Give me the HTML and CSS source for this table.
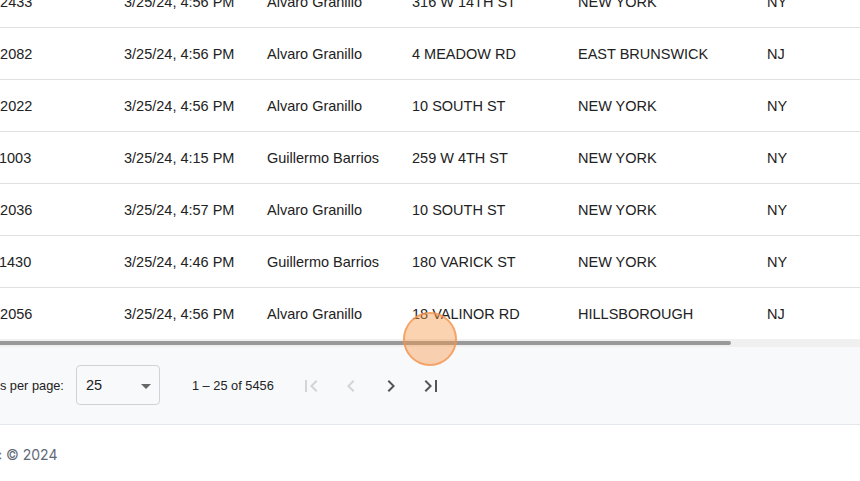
FILE: index.html
```html
<!DOCTYPE html>
<html>
<head>
<meta charset="utf-8">
<link rel="stylesheet" href="styles.css">
</head>
<body>
<div class="viewport">
  <div class="table-wrap">
    <div class="table">
      <div class="row"><div class="c c1">12433</div><div class="c c2">3/25/24, 4:56 PM</div><div class="c c3">Alvaro Granillo</div><div class="c c4">316 W 14TH ST</div><div class="c c5">NEW YORK</div><div class="c c6">NY</div></div>
      <div class="row"><div class="c c1">12082</div><div class="c c2">3/25/24, 4:56 PM</div><div class="c c3">Alvaro Granillo</div><div class="c c4">4 MEADOW RD</div><div class="c c5">EAST BRUNSWICK</div><div class="c c6">NJ</div></div>
      <div class="row"><div class="c c1">12022</div><div class="c c2">3/25/24, 4:56 PM</div><div class="c c3">Alvaro Granillo</div><div class="c c4">10 SOUTH ST</div><div class="c c5">NEW YORK</div><div class="c c6">NY</div></div>
      <div class="row"><div class="c c1">11003</div><div class="c c2">3/25/24, 4:15 PM</div><div class="c c3">Guillermo Barrios</div><div class="c c4">259 W 4TH ST</div><div class="c c5">NEW YORK</div><div class="c c6">NY</div></div>
      <div class="row"><div class="c c1">12036</div><div class="c c2">3/25/24, 4:57 PM</div><div class="c c3">Alvaro Granillo</div><div class="c c4">10 SOUTH ST</div><div class="c c5">NEW YORK</div><div class="c c6">NY</div></div>
      <div class="row"><div class="c c1">11430</div><div class="c c2">3/25/24, 4:46 PM</div><div class="c c3">Guillermo Barrios</div><div class="c c4">180 VARICK ST</div><div class="c c5">NEW YORK</div><div class="c c6">NY</div></div>
      <div class="row last"><div class="c c1">12056</div><div class="c c2">3/25/24, 4:56 PM</div><div class="c c3">Alvaro Granillo</div><div class="c c4">18 VALINOR RD</div><div class="c c5">HILLSBOROUGH</div><div class="c c6">NJ</div></div>
    </div>
    <div class="scrollbar"><div class="thumb"></div></div>
    <div class="cursor-dot"></div>
  </div>
  <div class="paginator">
    <span class="pg-label">Items per page:</span>
    <div class="select"><span>25</span><span class="arrow"></span></div>
    <span class="range">1 – 25 of 5456</span>
    <div class="btns">
      <button class="pbtn disabled" aria-label="First page"><svg viewBox="0 0 24 24" width="24" height="24"><path d="M18.41 16.59L13.82 12l4.590-4.59L17 6l-6 6 6 6zM6 6h2v12H6z"/></svg></button>
      <button class="pbtn disabled" aria-label="Previous page"><svg viewBox="0 0 24 24" width="24" height="24"><path d="M15.41 7.41L14 6l-6 6 6 6 1.41-1.41L10.83 12z"/></svg></button>
      <button class="pbtn" aria-label="Next page"><svg viewBox="0 0 24 24" width="24" height="24"><path d="M10 6L8.59 7.41 13.17 12l-4.58 4.59L10 18l6-6z"/></svg></button>
      <button class="pbtn" aria-label="Last page"><svg viewBox="0 0 24 24" width="24" height="24"><path d="M5.59 7.41L10.18 12l-4.59 4.59L7 18l6-6-6-6zM16 6h2v12h-2z"/></svg></button>
    </div>
  </div>
  <footer class="footer">Inc © 2024</footer>
</div>
</body>
</html>
```
FILE: styles.css
```css
html, body {
  margin: 0;
  padding: 0;
  background: #ffffff;
  overflow: hidden;
}
.viewport {
  width: 860px;
  height: 481px;
  overflow: hidden;
  font-family: "Liberation Sans", Arial, sans-serif;
}
.table-wrap {
  position: relative;
  margin-top: -24px;
}
.table {
  display: flex;
  flex-direction: column;
  margin-left: -24px;
}
.row {
  display: flex;
  align-items: center;
  height: 52px;
  box-sizing: border-box;
  border-bottom: 1px solid #e0e0e0;
  font-size: 14.5px;
  color: #222222;
  white-space: nowrap;
  padding-top: 1px;
}
.row.last {
  border-bottom: none;
  height: 51px;
}
.c {
  padding-left: 16px;
  box-sizing: border-box;
  flex: none;
}
.c1 { width: 132px; }
.c2 { width: 143px; }
.c3 { width: 145px; }
.c4 { width: 166px; }
.c5 { width: 189px; }
.c6 { width: 120px; }
.scrollbar {
  height: 8px;
  background: #f0f0f0;
  display: flex;
  align-items: center;
}
.thumb {
  width: 731px;
  height: 4px;
  background: #999999;
  border-radius: 0 2px 2px 0;
}
.cursor-dot {
  position: absolute;
  left: 403px;
  top: 336px;
  width: 50px;
  height: 50px;
  border-radius: 50%;
  background: rgba(248, 150, 70, 0.42);
  border: 2px solid rgba(243, 150, 80, 0.75);
}
.paginator {
  height: 77px;
  background: #f8f9fb;
  border-bottom: 1px solid #e4e7ec;
  display: flex;
  align-items: center;
  font-size: 12.8px;
  color: #222222;
  margin-left: -25px;
}
.pg-label {
  margin-right: 12px;
  white-space: nowrap;
}
.select {
  width: 84px;
  height: 40px;
  box-sizing: border-box;
  border: 1px solid #cfd2d6;
  border-radius: 4px;
  background: #f8f9fb;
  display: flex;
  align-items: center;
  justify-content: space-between;
  padding: 0 8px 0 9px;
  font-size: 14.5px;
  margin-top: -1px;
}
.arrow {
  width: 0;
  height: 0;
  border-left: 5px solid transparent;
  border-right: 5px solid transparent;
  border-top: 5px solid #666666;
  margin-top: 2px;
}
.range {
  margin-left: 32px;
  white-space: nowrap;
}
.btns {
  display: flex;
  margin-left: 17px;
}
.pbtn {
  width: 40px;
  height: 40px;
  padding: 0;
  border: none;
  background: transparent;
  display: flex;
  align-items: center;
  justify-content: center;
}
.pbtn svg {
  fill: #555555;
}
.pbtn.disabled svg {
  fill: #d2d4d7;
}
.footer {
  height: 56px;
  display: flex;
  align-items: center;
  margin-left: -18px;
  font-family: Inter, "Noto Sans", sans-serif;
  font-size: 14px;
  color: #5f6977;
  padding-top: 1px;
}
```
